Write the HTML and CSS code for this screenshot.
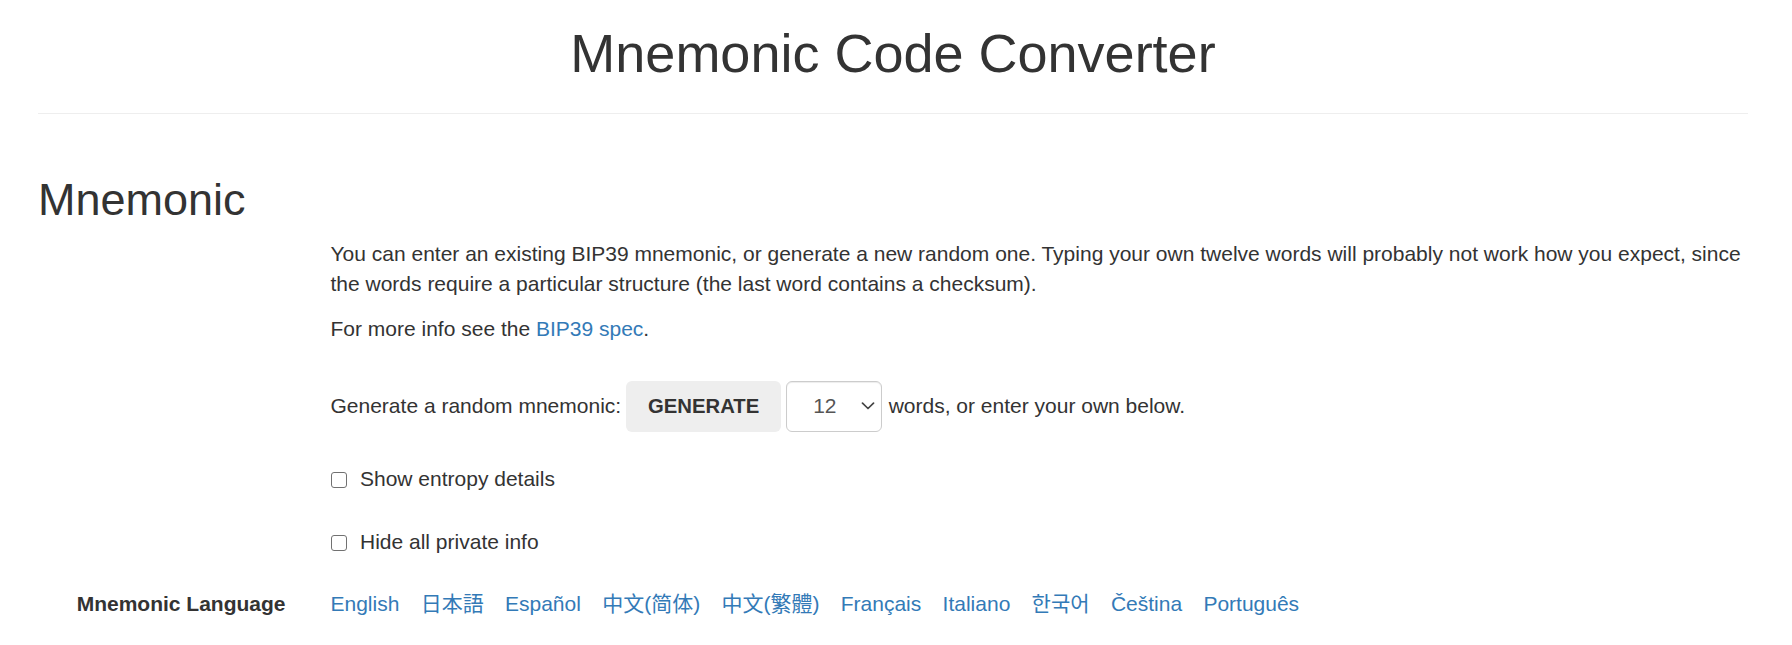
FILE: index.html
```html
<!DOCTYPE html>
<html lang="en">
<head>
<meta charset="utf-8">
<title>Mnemonic Code Converter</title>
<link rel="stylesheet" href="styles.css">
</head>
<body>
<div class="page">
  <h1 class="title">Mnemonic Code Converter</h1>
  <hr class="rule">
  <h2 class="section-title">Mnemonic</h2>

  <div class="form-row intro-row">
    <div class="form-label"></div>
    <div class="form-body">
      <p class="help">You can enter an existing BIP39 mnemonic, or generate a new random one. Typing your own twelve words will probably not work how you expect, since the words require a particular structure (the last word contains a checksum).</p>
      <p class="help">For more info see the <a class="link" href="#bip39">BIP39 spec</a>.</p>
    </div>
  </div>

  <div class="form-row generate-row">
    <div class="form-label"></div>
    <div class="form-body generate-line">
      <span class="gen-text">Generate a random mnemonic:</span>
      <button class="btn-generate" type="button">GENERATE</button>
      <span class="select-wrap">
        <select class="strength">
          <option>3</option>
          <option>6</option>
          <option>9</option>
          <option selected>12</option>
          <option>15</option>
          <option>18</option>
          <option>21</option>
          <option>24</option>
        </select>
        <svg class="chevron" width="14" height="8" viewBox="0 0 14 8"><path d="M1.5 1.2 L7 6.5 L12.5 1.2" fill="none" stroke="#444" stroke-width="1.7" stroke-linecap="round" stroke-linejoin="round"/></svg>
      </span>
      <span class="after-text">words, or enter your own below.</span>
    </div>
  </div>

  <div class="form-row check-row check-first">
    <div class="form-label"></div>
    <label class="form-body check-line"><input class="check" type="checkbox"><span>Show entropy details</span></label>
  </div>

  <div class="form-row check-row check-second">
    <div class="form-label"></div>
    <label class="form-body check-line"><input class="check" type="checkbox"><span>Hide all private info</span></label>
  </div>

  <div class="form-row lang-row">
    <div class="form-label lang-label">Mnemonic Language</div>
    <div class="form-body languages">
      <a class="link" href="#english">English</a>
      <a class="link" href="#japanese" lang="ja">日本語</a>
      <a class="link" href="#spanish">Español</a>
      <a class="link" href="#chinese_simplified" lang="zh-CN">中文(简体)</a>
      <a class="link" href="#chinese_traditional" lang="zh-TW">中文(繁體)</a>
      <a class="link" href="#french">Français</a>
      <a class="link" href="#italian">Italiano</a>
      <a class="link" href="#korean" lang="ko">한국어</a>
      <a class="link" href="#czech">Čeština</a>
      <a class="link" href="#portuguese">Português</a>
    </div>
  </div>
</div>
</body>
</html>
```

FILE: styles.css
```css
html, body {
  margin: 0;
  padding: 0;
  background: #fff;
}

body {
  font-family: "Liberation Sans", Arial, "Noto Sans CJK SC", "Noto Sans CJK KR", sans-serif;
  font-size: 21px;
  line-height: 30px;
  color: #333;
}

.page {
  padding: 0 44px 0 38px;
}

.title {
  margin: 24px 0 29.6px;
  font-size: 54px;
  line-height: 59.4px;
  font-weight: 400;
  text-align: center;
  color: #333;
}

.rule {
  margin: 0;
  height: 0;
  border: 0;
  border-top: 1px solid #eee;
}

.section-title {
  margin: 60.6px 0 14.6px;
  font-size: 45px;
  line-height: 49.5px;
  font-weight: 400;
  color: #333;
}

.form-row {
  display: grid;
  grid-template-columns: 247.5px 1fr;
  column-gap: 45px;
}

.form-label {
  text-align: right;
}

.help {
  margin: 0 0 15px;
}

.link {
  color: #337ab7;
  text-decoration: none;
}

.generate-row {
  margin-top: 22.3px;
}

.generate-line {
  display: flex;
  align-items: center;
  height: 51px;
}

.gen-text {
  margin-right: 5px;
}

.btn-generate {
  width: 155px;
  height: 51px;
  padding: 0;
  border: 1px solid transparent;
  border-radius: 6px;
  background: #eee;
  color: #333;
  font-family: "Liberation Sans", Arial, sans-serif;
  font-size: 20.3px;
  font-weight: 700;
  line-height: 30px;
  text-align: center;
  cursor: pointer;
}

.select-wrap {
  position: relative;
  display: inline-block;
  margin-left: 5px;
  height: 51px;
}

.strength {
  -webkit-appearance: none;
  appearance: none;
  width: 96px;
  height: 51px;
  margin: 0;
  padding: 0 0 0 26px;
  border: 1px solid #ccc;
  border-radius: 6px;
  background: #fff;
  color: #555;
  font-family: "Liberation Sans", Arial, sans-serif;
  font-size: 21px;
  line-height: 30px;
  box-shadow: inset 0 1px 1px rgba(0, 0, 0, 0.075);
}

.chevron {
  position: absolute;
  left: 75px;
  top: 21px;
  pointer-events: none;
}

.after-text {
  margin-left: 6.5px;
}

.check-first {
  margin-top: 31.7px;
}

.check-second {
  margin-top: 33.3px;
}

.check-line {
  display: flex;
  align-items: center;
  height: 30px;
  font-weight: 400;
  cursor: pointer;
}

.check {
  -webkit-appearance: none;
  appearance: none;
  width: 16px;
  height: 16px;
  margin: 3px 13px 0 0.5px;
  border: 1.5px solid #717171;
  border-radius: 3px;
  background: #fff;
  box-sizing: border-box;
  flex: none;
}

.lang-row {
  margin-top: 31.7px;
}

.lang-label {
  font-weight: 700;
}

.languages {
  display: flex;
  flex-wrap: wrap;
  column-gap: 21.3px;
}
```
